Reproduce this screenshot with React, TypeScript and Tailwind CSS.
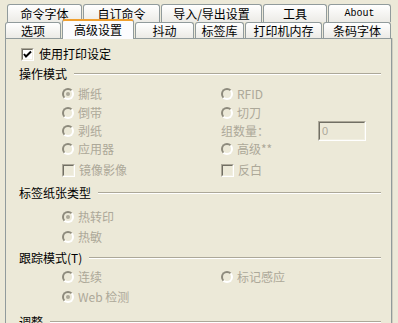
import React from "react";

const GRAY = "text-[#ACA899]";

function Radio({ checked }: { checked?: boolean }) {
  return (
    <span className="w-[12px] h-[12px] shrink-0 rounded-full border-2 border-t-[#8D8A7C] border-l-[#8D8A7C] border-b-white border-r-white bg-[#ECE9D8] flex items-center justify-center">
      {checked && <span className="w-[4px] h-[4px] rounded-full bg-[#ACA899]" />}
    </span>
  );
}

function Check({ checked, disabled }: { checked?: boolean; disabled?: boolean }) {
  return (
    <span className="w-[13px] h-[13px] shrink-0 flex border border-t-[#ACA899] border-l-[#ACA899] border-b-white border-r-white">
      <span
        className={
          "flex-1 flex items-center justify-center border border-t-[#716F64] border-l-[#716F64] border-b-[#F1EFE2] border-r-[#F1EFE2] " +
          (disabled ? "bg-[#ECE9D8]" : "bg-white")
        }
      >
        {checked && (
          <svg width="9" height="9" viewBox="0 0 9 9">
            <polyline points="1,4 3,6.5 8,1.5" fill="none" stroke="#000" strokeWidth="2" />
          </svg>
        )}
      </span>
    </span>
  );
}

function Row({ h, children }: { h: number; children: React.ReactNode }) {
  return (
    <div style={{ height: h }} className="relative">
      <div className="h-[20px] flex items-center">{children}</div>
    </div>
  );
}

function GroupHead({ label }: { label: string }) {
  return (
    <div className="flex items-center pl-[13px] pr-[10px] w-full">
      <span className="text-black whitespace-nowrap">{label}</span>
      <span className="flex-1 ml-[7px] h-[2px] border-t border-t-[#ACA899] border-b border-b-white" />
    </div>
  );
}

function RItem({ label, checked, x }: { label: string; checked?: boolean; x: number }) {
  return (
    <div className="absolute top-0 h-[20px] flex items-center gap-[4px]" style={{ left: x }}>
      <Radio checked={checked} />
      <span className={GRAY + " whitespace-nowrap"}>{label}</span>
    </div>
  );
}

function CItem({ label, x }: { label: string; x: number }) {
  return (
    <div className="absolute top-0 h-[20px] flex items-center gap-[4px]" style={{ left: x }}>
      <Check disabled />
      <span className={GRAY + " whitespace-nowrap"}>{label}</span>
    </div>
  );
}

function Tab({ label, w, mono }: { label: string; w: number; mono?: boolean }) {
  return (
    <div
      style={{ width: w }}
      className="h-full shrink-0 rounded-t-[3px] border border-b-0 border-[#919B9C] bg-gradient-to-b from-white to-[#ECEBE6] flex items-center justify-center text-black"
    >
      <span className={mono ? "font-['Liberation_Mono',monospace] text-[10px]" : ""}>{label}</span>
    </div>
  );
}

export default function App() {
  const C1 = 56;
  const C2 = 215;
  return (
    <div className="w-[398px] h-[323px] overflow-hidden bg-[#ECE9D8] text-[12px] leading-[14px] font-['Noto_Sans_CJK_SC','Noto_Sans',sans-serif]">
      <div className="pt-[4px]">
        <div className="flex gap-[1px] pl-[7px] h-[18px]">
          <Tab label="命令字体" w={75} />
          <Tab label="自订命令" w={77} />
          <Tab label="导入/导出设置" w={101} />
          <Tab label="工具" w={64} />
          <Tab label="About" w={63} mono />
        </div>
        <div className="flex pl-[5px] h-[16px] items-end relative z-10 gap-[1px]">
          <Tab label="选项" w={56} />
          <div className="w-[72px] h-[20px] -mb-[1px] shrink-0 rounded-t-[3px] border border-b-0 border-[#919B9C] border-t-2 border-t-[#F0A030] bg-[#FCFCFE] flex items-center justify-center text-black pb-[1px]">
            高级设置
          </div>
          <Tab label="抖动" w={59} />
          <Tab label="标签库" w={49} />
          <Tab label="打印机内存" w={77} />
          <Tab label="条码字体" w={68} />
        </div>
        <div className="ml-[5px] w-[387px] h-[300px] border border-[#919B9C] bg-[#ECE9D8] pt-[5px] shadow-[1px_0_0_#D0CEBF]">
          <Row h={20}>
            <div className="pl-[15px] flex items-center gap-[5px]">
              <Check checked />
              <span className="text-black">使用打印设定</span>
            </div>
          </Row>
          <Row h={20}>
            <GroupHead label="操作模式" />
          </Row>
          <Row h={19}>
            <RItem label="撕纸" checked x={C1} />
            <RItem label="RFID" x={C2} />
          </Row>
          <Row h={18}>
            <RItem label="倒带" x={C1} />
            <RItem label="切刀" x={C2} />
          </Row>
          <Row h={18}>
            <RItem label="剥纸" x={C1} />
            <div className="absolute top-0 h-[20px] flex items-center" style={{ left: C2 }}>
              <span className={GRAY}>组数量：</span>
            </div>
            <div className="absolute top-0 left-[312px] w-[48px] h-[20px] border border-t-[#ACA899] border-l-[#ACA899] border-b-white border-r-white">
              <div className="w-full h-full border border-t-[#716F64] border-l-[#716F64] border-b-[#F1EFE2] border-r-[#F1EFE2] bg-[#ECE9D8] pl-[2px] flex items-center">
                <span className={GRAY + " font-['Liberation_Sans',sans-serif] text-[11px]"}>0</span>
              </div>
            </div>
          </Row>
          <Row h={21}>
            <RItem label="应用器" x={C1} />
            <RItem label="高级**" x={C2} />
          </Row>
          <Row h={23}>
            <CItem label="镜像影像" x={C1} />
            <CItem label="反白" x={C2} />
          </Row>
          <Row h={24}>
            <GroupHead label="标签纸张类型" />
          </Row>
          <Row h={20}>
            <RItem label="热转印" checked x={C1} />
          </Row>
          <Row h={21}>
            <RItem label="热敏" x={C1} />
          </Row>
          <Row h={19}>
            <GroupHead label="跟踪模式(T)" />
          </Row>
          <Row h={20}>
            <RItem label="连续" x={C1} />
            <RItem label="标记感应" x={C2} />
          </Row>
          <Row h={25}>
            <RItem label="Web 检测" checked x={C1} />
          </Row>
          <Row h={20}>
            <GroupHead label="调整" />
          </Row>
        </div>
      </div>
    </div>
  );
}
